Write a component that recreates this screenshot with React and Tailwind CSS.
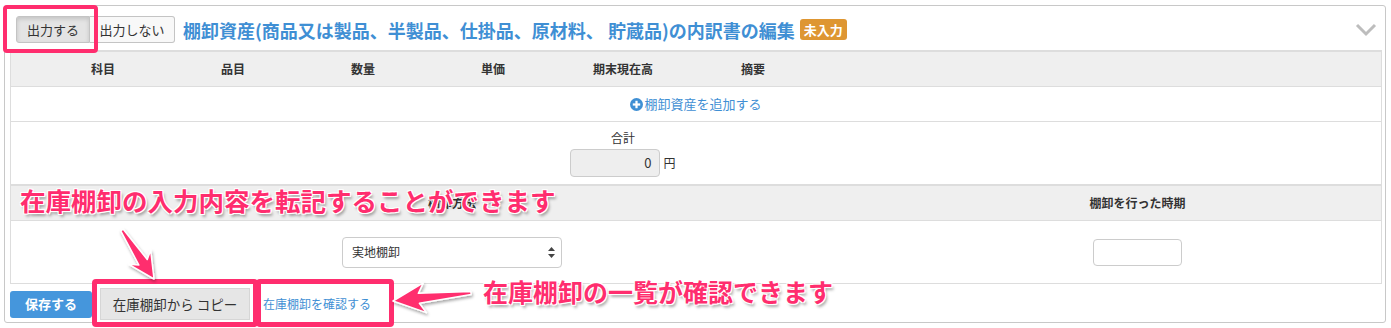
import React from 'react'

const jp = { fontFamily: '"Noto Sans CJK JP", "Noto Sans", sans-serif' }

// tapered skitch-style arrow, returns polygon points
function arrowPoints(tail, tip, headLen, headHalf) {
  const dx = tip[0] - tail[0]
  const dy = tip[1] - tail[1]
  const len = Math.hypot(dx, dy)
  const ux = dx / len
  const uy = dy / len
  const nx = -uy
  const ny = ux
  const base = [tip[0] - ux * headLen, tip[1] - uy * headLen]
  const back = [tip[0] - ux * (headLen - 6), tip[1] - uy * (headLen - 6)]
  const pts = [
    [tail[0] + nx * 1.5, tail[1] + ny * 1.5],
    [back[0] + nx * 5, back[1] + ny * 5],
    [base[0] + nx * headHalf, base[1] + ny * headHalf],
    tip,
    [base[0] - nx * headHalf, base[1] - ny * headHalf],
    [back[0] - nx * 5, back[1] - ny * 5],
    [tail[0] - nx * 1.5, tail[1] - ny * 1.5],
  ]
  return pts.map((p) => p.join(',')).join(' ')
}

const headers = ['科目', '品目', '数量', '単価', '期末現在高', '摘要']

export default function App() {
  return (
    <div className="relative w-[1391px] h-[328px] overflow-hidden bg-white pt-[5px] pl-[4px] pr-[5px] text-[#333]" style={jp}>
      {/* panel */}
      <div className="border border-[#c8c8c8] rounded-[3px] h-[318px] flex flex-col">
        <div className="flex items-center pt-[10px] pb-[7px] pl-[11px] pr-[8px]">
          <div className="flex h-[27px]">
            <button className="w-[74px] h-full text-[13px] bg-[#e4e4e4] border border-[#c4c4c4] rounded-l-[3px] shadow-[inset_0_2px_4px_rgba(0,0,0,0.15)]">
              出力する
            </button>
            <button className="w-[85px] h-full text-[13px] bg-[#f8f8f8] border border-l-0 border-[#c4c4c4] rounded-r-[3px]">
              出力しない
            </button>
          </div>
          <h3 className="ml-[8px] text-[18px] font-bold text-[#3f8fd4] leading-none">
            棚卸資産(商品又は製品、半製品、仕掛品、原材料、 貯蔵品)の内訳書の編集
          </h3>
          <span className="ml-[5px] px-[4px] h-[21px] flex items-center text-[13px] font-bold text-white bg-[#de9632] rounded-[3px]">
            未入力
          </span>
          <svg className="ml-auto" width="22" height="14" viewBox="0 0 22 14">
            <polyline points="2,2 11,11 20,2" fill="none" stroke="#bdbdbd" strokeWidth="3" />
          </svg>
        </div>

        {/* item table */}
        <div className="ml-[5px] mr-[3px] border-x border-[#ddd]">
          <div className="flex items-center h-[36px] border-t-2 border-[#ddd] bg-[#efefef] text-[12px] font-bold">
            <div className="w-[27px]" />
            {headers.map((h) => (
              <div key={h} className="w-[130px] text-center">{h}</div>
            ))}
          </div>
          <div className="flex items-center justify-center h-[35px] border-t border-[#ddd] text-[13px] text-[#3f8fd4]">
            <svg width="13" height="13" viewBox="0 0 14 14" className="mr-[1px]">
              <circle cx="7" cy="7" r="7" fill="#3f8fd4" />
              <rect x="3" y="5.8" width="8" height="2.4" fill="#fff" />
              <rect x="5.8" y="3" width="2.4" height="8" fill="#fff" />
            </svg>
            棚卸資産を追加する
          </div>
          <div className="flex h-[63px] border-t border-[#ddd]">
            <div className="w-[547px]" />
            <div className="w-[130px] flex flex-col items-center pt-[8px]">
              <div className="text-[12px] leading-[16px]">合計</div>
              <div className="flex items-center mt-[3px]">
                <div className="w-[90px] h-[28px] bg-[#eee] border border-[#ccc] rounded-[4px] flex items-center justify-end pr-[8px] text-[13px]">
                  0
                </div>
                <span className="ml-[3px] text-[12px]">円</span>
              </div>
            </div>
          </div>
        </div>

        {/* method table */}
        <div className="ml-[5px] mr-[3px] border-x border-b border-[#ddd]">
          <div className="flex items-center h-[36px] border-t-2 border-[#ddd] bg-[#efefef] text-[12px] font-bold">
            <div className="w-[311px]" />
            <div className="w-[260px] text-center">棚卸方法</div>
            <div className="w-[312px]" />
            <div className="flex-1 text-center">棚卸を行った時期</div>
          </div>
          <div className="flex items-center h-[63px] border-t border-[#ddd]">
            <div className="w-[331px]" />
            <div className="w-[220px] h-[31px] border border-[#ccc] rounded-[4px] flex items-center justify-between pl-[9px] pr-[6px] text-[12px]">
              実地棚卸
              <svg width="7" height="11" viewBox="0 0 7 11">
                <polygon points="3.5,0 7,4 0,4" fill="#444" />
                <polygon points="0,7 7,7 3.5,11" fill="#444" />
              </svg>
            </div>
            <div className="w-[332px]" />
            <div className="flex-1 flex justify-center">
              <div className="w-[89px] h-[27px] border border-[#ccc] rounded-[4px]" />
            </div>
          </div>
        </div>

        {/* footer */}
        <div className="flex items-center mt-[4px] ml-[5px]">
          <button className="w-[82px] h-[27px] bg-[#4596dc] text-white text-[13px] font-bold rounded-[3px]">
            保存する
          </button>
          <button className="ml-[8px] w-[150px] h-[32px] bg-[#e6e6e6] border border-[#d6d6d6] text-[13.5px]">
            在庫棚卸から コピー
          </button>
          <a className="ml-[13px] text-[12px] text-[#3f8fd4]">在庫棚卸を確認する</a>
        </div>
      </div>

      {/* annotations */}
      <div className="absolute left-[3px] top-[5px] w-[95px] h-[48px] border-[4px] border-[#ff2d6e] rounded-[4px] pointer-events-none" />
      <div className="absolute left-[92px] top-[279px] w-[166px] h-[48px] border-[5px] border-[#ff2d6e] rounded-[4px] pointer-events-none" />
      <div className="absolute left-[256px] top-[279px] w-[138px] h-[48px] border-[5px] border-[#ff2d6e] rounded-[4px] pointer-events-none" />

      <svg className="absolute inset-0 pointer-events-none" width="1391" height="328">
        <defs>
          <filter id="sh" x="-20%" y="-20%" width="140%" height="140%">
            <feDropShadow dx="1" dy="2" stdDeviation="1.5" floodColor="#000" floodOpacity="0.35" />
          </filter>
        </defs>
        <polygon
          points={arrowPoints([122, 230], [154, 279], 26, 13)}
          fill="#ff2d6e"
          stroke="#fff"
          strokeWidth="1.5"
          strokeLinejoin="round"
          filter="url(#sh)"
        />
        <polygon
          points={arrowPoints([471, 293], [393, 301], 32, 15)}
          fill="#ff2d6e"
          stroke="#fff"
          strokeWidth="1.5"
          strokeLinejoin="round"
          filter="url(#sh)"
        />
      </svg>

      <div className="absolute left-[20px] top-[187px] text-[25.5px] leading-none font-bold text-[#ff2d6e] whitespace-nowrap pointer-events-none [text-shadow:0_0_2px_#fff,1px_1px_0_#fff,-1px_-1px_0_#fff,1px_-1px_0_#fff,-1px_1px_0_#fff,2px_3px_3px_rgba(0,0,0,0.35)]">
        在庫棚卸の入力内容を転記することができます
      </div>
      <div className="absolute left-[483px] top-[279px] text-[25px] leading-none font-bold text-[#ff2d6e] whitespace-nowrap pointer-events-none [text-shadow:0_0_2px_#fff,1px_1px_0_#fff,-1px_-1px_0_#fff,1px_-1px_0_#fff,-1px_1px_0_#fff,2px_3px_3px_rgba(0,0,0,0.35)]">
        在庫棚卸の一覧が確認できます
      </div>
    </div>
  )
}
